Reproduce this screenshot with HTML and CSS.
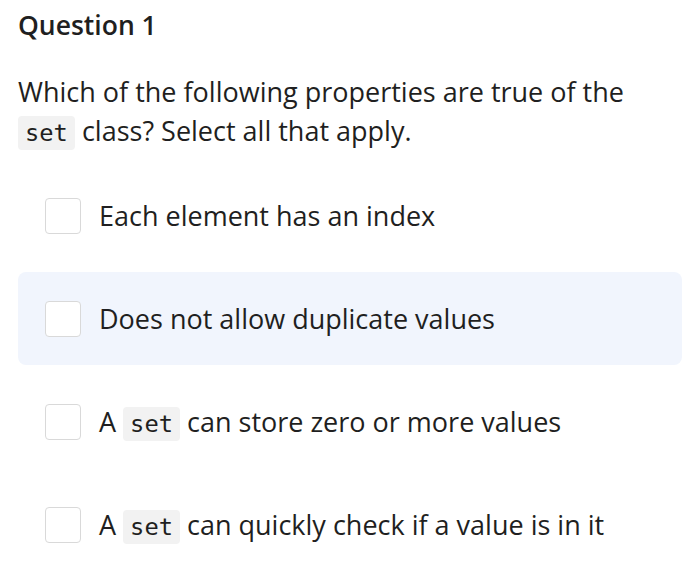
FILE: index.html
```html
<!DOCTYPE html>
<html>
<head>
<meta charset="utf-8">
<link rel="stylesheet" href="styles.css">
</head>
<body>
<div class="quiz">
  <h1 class="title">Question 1</h1>
  <p class="prompt">Which of the following properties are true of the <code class="code">set</code> class? Select all that apply.</p>
  <div class="options">
    <label class="option"><span class="box"></span><span class="text">Each element has an index</span></label>
    <label class="option option-hover"><span class="box"></span><span class="text">Does not allow duplicate values</span></label>
    <label class="option"><span class="box"></span><span class="text">A <code class="code">set</code> can store zero or more values</span></label>
    <label class="option"><span class="box"></span><span class="text">A <code class="code">set</code> can quickly check if a value is in it</span></label>
  </div>
</div>
</body>
</html>
```
FILE: styles.css
```css
html, body {
  margin: 0;
  padding: 0;
  background: #ffffff;
}
body {
  font-family: "Open Sans", "Noto Sans", sans-serif;
  color: #1f1f21;
}
.quiz {
  padding: 6px 18px 0 18px;
}
.title {
  margin: 0;
  font-size: 26.5px;
  font-weight: 600;
  line-height: 38px;
}
.prompt {
  margin: 28px 0 0 0;
  font-size: 27px;
  line-height: 39px;
  font-weight: 400;
}
.code {
  font-family: "DejaVu Sans Mono", "Liberation Mono", monospace;
  font-size: 0.88em;
  background: #f2f2f2;
  border-radius: 4px;
  padding: 3px 7px;
}
.options {
  margin-top: 16px;
  display: flex;
  flex-direction: column;
  gap: 10px;
}
.option {
  display: flex;
  align-items: center;
  height: 93px;
  padding-left: 27px;
  border-radius: 8px;
  font-size: 27px;
}
.option-hover {
  background: #f1f5fd;
}
.box {
  width: 34px;
  height: 34px;
  border: 1px solid #d9d9d9;
  border-radius: 4px;
  background: #fff;
  flex: none;
}
.text {
  margin-left: 18px;
}
```
